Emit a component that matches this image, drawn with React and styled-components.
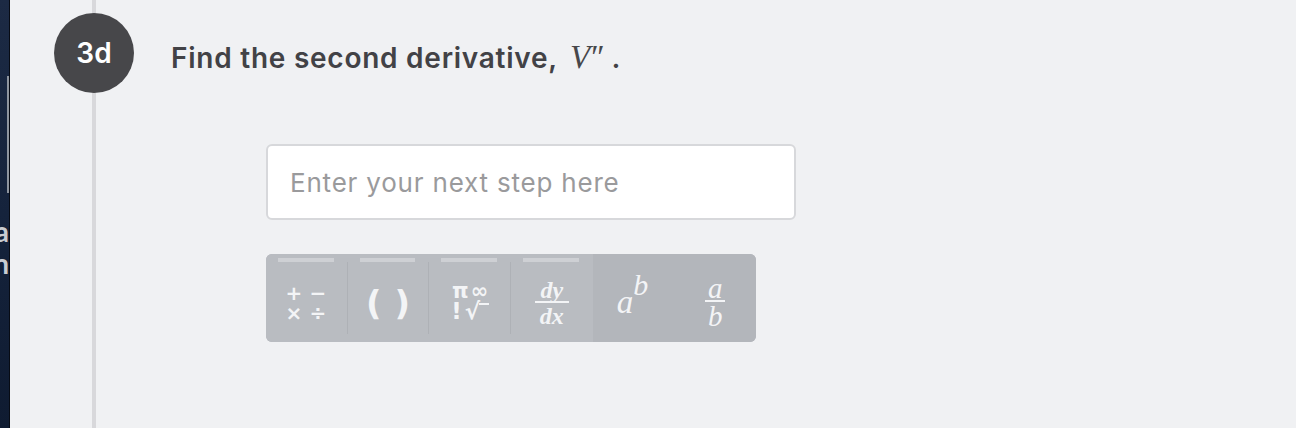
import React from "react";
import styled, { createGlobalStyle } from "styled-components";

const Global = createGlobalStyle`
  html, body { margin: 0; padding: 0; background: #f0f1f3; }
  body { font-family: Inter, "Open Sans", sans-serif; }
  #root { width: 1296px; height: 428px; overflow: hidden; }
`;

const ICON = "#f3f4f6";

const Page = styled.div`
  display: flex;
  width: 1296px;
  height: 428px;
  background: #f0f1f3;
`;

const Strip = styled.div`
  width: 9px;
  flex: none;
  border-right: 1px solid #070b14;
  background: linear-gradient(180deg, #1c2a44 0%, #15233c 50%, #0f1b31 100%);
  padding-top: 76px;
  overflow: hidden;
  display: flex;
  flex-direction: column;
`;

const Scroll = styled.div`
  width: 2px;
  height: 117px;
  margin-left: 7px;
  background: #8e959f;
`;

const StripText = styled.div`
  margin-top: 22px;
  display: flex;
  flex-direction: column;
`;

const StripLine = styled.div`
  display: flex;
  justify-content: flex-end;
  height: 32px;
  font: 700 28px/32px Lato, sans-serif;
  color: #c9ccd1;
  white-space: nowrap;
`;

const Timeline = styled.div`
  flex: none;
  width: 80px;
  margin-left: 44px;
  padding-top: 13px;
  background: linear-gradient(
    to right,
    transparent 38px,
    #d8d8db 38px,
    #d8d8db 42px,
    transparent 42px
  );
`;

const Badge = styled.div`
  width: 80px;
  height: 80px;
  border-radius: 50%;
  background: #47474a;
  color: #ffffff;
  display: flex;
  align-items: center;
  justify-content: center;
  font: 600 28px/1 Inter, sans-serif;
  letter-spacing: 0px;
`;

const Content = styled.div`
  display: flex;
  flex-direction: column;
  padding-top: 40px;
  margin-left: 37px;
`;

const Title = styled.h1`
  margin: 0;
  font: 600 28px/34px Inter, sans-serif;
  color: #424246;
  letter-spacing: 0.75px;
  white-space: nowrap;
`;

const MathVar = styled.span`
  font-family: "Liberation Serif", serif;
  font-style: italic;
  font-weight: 400;
  font-size: 33px;
  color: #47474a;
  letter-spacing: -1px;
  margin-left: 12px;
  margin-right: 10px;
`;

const Answer = styled.div`
  margin-top: 69px;
  margin-left: 95px;
  width: 530px;
  height: 76px;
  box-sizing: border-box;
  border: 2px solid #d7d8db;
  border-radius: 6px;
  background: #ffffff;
  display: flex;
  align-items: center;
  padding-left: 22px;
`;

const Placeholder = styled.span`
  font: 400 26px/1 Inter, sans-serif;
  color: #9a9a9c;
  letter-spacing: 0.8px;
  margin-top: 1px;
`;

const Toolbar = styled.div`
  margin-top: 34px;
  margin-left: 95px;
  width: 490px;
  height: 88px;
  border-radius: 6px;
  overflow: hidden;
  display: flex;
  background: #b3b6bb;
`;

const Tab = styled.div`
  position: relative;
  flex: 1 1 0;
  display: flex;
  align-items: center;
  justify-content: center;
  color: ${ICON};
  background: ${(p) => (p.$group ? "#b9bcc1" : "#b3b6bb")};
  padding-top: ${(p) => p.$pt || 0}px;
  &::before {
    content: "";
    display: ${(p) => (p.$group ? "block" : "none")};
    position: absolute;
    top: 4px;
    left: 12px;
    right: 14px;
    height: 4px;
    background: #ced0d4;
  }
  &::after {
    content: "";
    display: ${(p) => (p.$sep ? "block" : "none")};
    position: absolute;
    right: 0;
    top: 8px;
    bottom: 8px;
    width: 1px;
    background: #aeb1b6;
  }
`;

const OpGrid = styled.div`
  display: grid;
  grid-template-columns: 13px 13px;
  grid-auto-rows: 20px;
  column-gap: 11px;
  margin-left: -2px;
  font: 700 20px/20px "DejaVu Sans", sans-serif;
  & > span {
    display: flex;
    align-items: center;
    justify-content: center;
  }
`;

const Parens = styled.div`
  display: flex;
  gap: 13px;
  font: 700 34px/1 "DejaVu Sans", sans-serif;
  margin-left: -1px;
`;

const Stack = styled.div`
  display: flex;
  flex-direction: column;
  align-items: center;
`;

const SymRow = styled.div`
  font: 700 ${(p) => p.$size}px / ${(p) => p.$lh}px "DejaVu Sans", sans-serif;
  display: flex;
  align-items: flex-start;
  gap: ${(p) => p.$gap || 0}px;
`;

const Overline = styled.span`
  display: inline-block;
  width: 10px;
  height: 2px;
  margin-top: 3px;
  margin-left: -4px;
  background: ${ICON};
`;

const Frac = styled.div`
  display: flex;
  flex-direction: column;
  align-items: center;
  font-family: "Liberation Serif", serif;
  font-style: italic;
  font-weight: ${(p) => (p.$bold ? 700 : 400)};
  font-size: ${(p) => p.$size}px;
  line-height: ${(p) => p.$lh}px;
`;

const FracBar = styled.div`
  width: ${(p) => p.$w}px;
  height: 2px;
  background: ${ICON};
  margin: ${(p) => p.$m || "2px 0"};
`;

const Power = styled.div`
  font-family: "Liberation Serif", serif;
  font-style: italic;
  font-size: 33px;
  line-height: 1;
  display: flex;
  align-items: flex-start;
  padding-top: 8px;
  margin-left: -2px;
`;

const Sup = styled.span`
  font-size: 30px;
  margin-top: -16px;
`;

export default function App() {
  return (
    <>
      <Global />
      <Page>
        <Strip>
          <Scroll />
          <StripText>
            <StripLine>da</StripLine>
            <StripLine>on</StripLine>
          </StripText>
        </Strip>
        <Timeline>
          <Badge>3d</Badge>
        </Timeline>
        <Content>
          <Title>
            Find the second derivative,<MathVar>V′′</MathVar>.
          </Title>
          <Answer>
            <Placeholder>Enter your next step here</Placeholder>
          </Answer>
          <Toolbar>
            <Tab $group $sep $pt={10}>
              <OpGrid>
                <span>+</span>
                <span>−</span>
                <span>×</span>
                <span>÷</span>
              </OpGrid>
            </Tab>
            <Tab $group $sep $pt={10}>
              <Parens>
                <span>(</span>
                <span>)</span>
              </Parens>
            </Tab>
            <Tab $group $sep $pt={8}>
              <Stack>
                <SymRow $size={21} $lh={18} $gap={2}>
                  <span>π</span>
                  <span>∞</span>
                </SymRow>
                <SymRow $size={23} $lh={22} $gap={3}>
                  <span>!</span>
                  <span>√</span>
                  <Overline />
                </SymRow>
              </Stack>
            </Tab>
            <Tab $group $pt={10}>
              <Frac $bold $size={24} $lh={20}>
                <span>dy</span>
                <FracBar $w={34} $m="1px 0 3px" />
                <span>dx</span>
              </Frac>
            </Tab>
            <Tab>
              <Power>
                a<Sup>b</Sup>
              </Power>
            </Tab>
            <Tab $pt={8}>
              <Frac $size={29} $lh={22}>
                <span>a</span>
                <FracBar $w={20} $m="1px 0 3px" />
                <span>b</span>
              </Frac>
            </Tab>
          </Toolbar>
        </Content>
      </Page>
    </>
  );
}
